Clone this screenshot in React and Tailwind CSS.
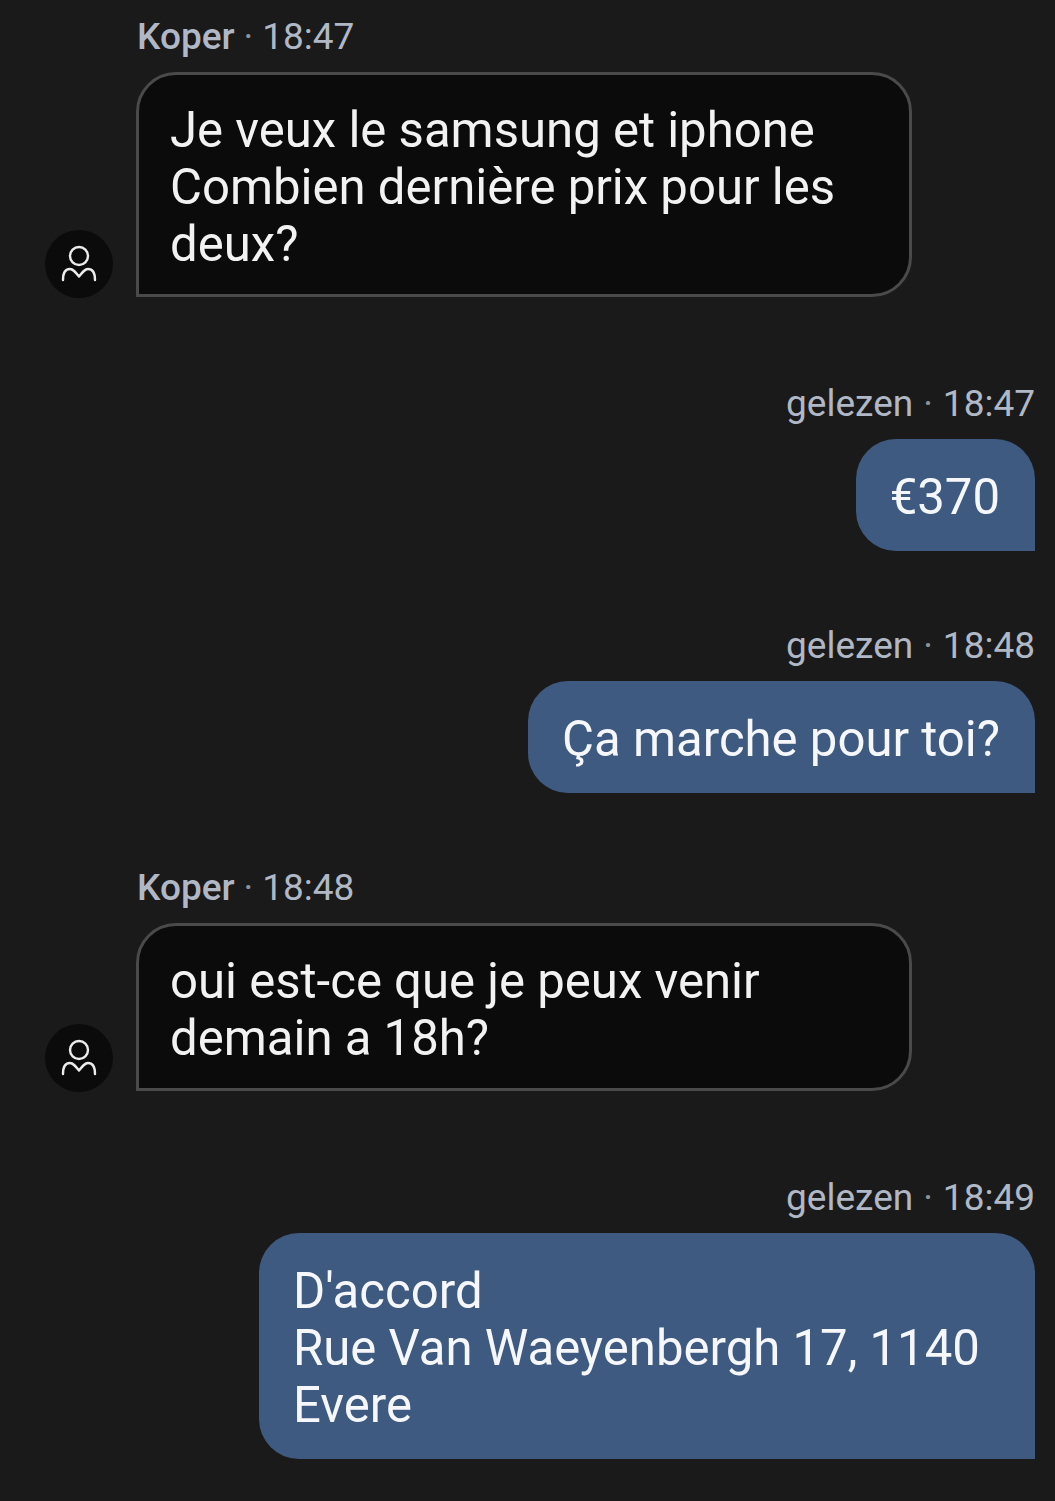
const font = { fontFamily: 'Roboto, sans-serif' }

function UserIcon() {
  return (
    <svg width="38" height="38" viewBox="0 0 38 38" fill="none" stroke="#ececec" strokeWidth="2.4" strokeLinecap="round" strokeLinejoin="round">
      <circle cx="19" cy="11" r="9" />
      <path d="M3 35c0-7 2.500-11 7-11 3 0 5 2.500 9 7.500 4-5 6-7.500 9-7.500 4.500 0 7 4 7 11" />
    </svg>
  )
}

function Meta({ name, text, time, right }) {
  return (
    <div className={`flex h-[42px] items-center text-[37px] leading-[42px] text-[#b0b8c6] ${right ? 'justify-end' : ''}`}>
      {name && <span className="font-medium">{name}</span>}
      {text && <span>{text}</span>}
      <span className={`${right ? 'mx-[10px]' : 'mx-[9px]'} text-[#8d929c]`}>·</span>
      <span>{time}</span>
    </div>
  )
}

function Received({ time, lines, className }) {
  return (
    <div className={`pl-[45px] ${className}`}>
      <div className="pl-[92px]">
        <Meta name="Koper" time={time} />
      </div>
      <div className="mt-[14px] flex items-end gap-[23px]">
        <div className="flex h-[68px] w-[68px] shrink-0 -mb-px items-center justify-center rounded-full bg-[#0b0b0b]">
          <UserIcon />
        </div>
        <div className="w-[776px] rounded-[40px] rounded-bl-none border-[3px] border-[#4a4a4a] bg-[#0b0b0b] pb-[21px] pl-[31px] pr-[30px] pt-[27px] text-[49.1px] leading-[57px] text-[#f2f2f2]">
          {lines.map((line) => (
            <div key={line}>{line}</div>
          ))}
        </div>
      </div>
    </div>
  )
}

function Sent({ time, lines, className }) {
  return (
    <div className={`flex flex-col items-end pr-[20px] ${className}`}>
      <Meta text="gelezen" time={time} right />
      <div className="mt-[14px] max-w-[776px] rounded-[40px] rounded-br-none bg-[#3e5a80] pb-[25px] pl-[34px] pr-[35px] pt-[30px] text-[49.1px] leading-[57px] text-[#f5f7fa]">
        {lines.map((line) => (
          <div key={line}>{line}</div>
        ))}
      </div>
    </div>
  )
}

export default function App() {
  return (
    <div className="h-[1501px] overflow-hidden bg-[#1a1a1a] pt-[16px]" style={font}>
      <Received time="18:47" lines={['Je veux le samsung et iphone', 'Combien dernière prix pour les deux?']} />
      <Sent className="mt-[86px]" time="18:47" lines={['€370']} />
      <Sent className="mt-[74px]" time="18:48" lines={['Ça marche pour toi?']} />
      <Received className="mt-[74px]" time="18:48" lines={['oui est-ce que je peux venir demain a 18h?']} />
      <Sent className="mt-[86px]" time="18:49" lines={["D'accord", 'Rue Van Waeyenbergh 17, 1140 Evere']} />
    </div>
  )
}
